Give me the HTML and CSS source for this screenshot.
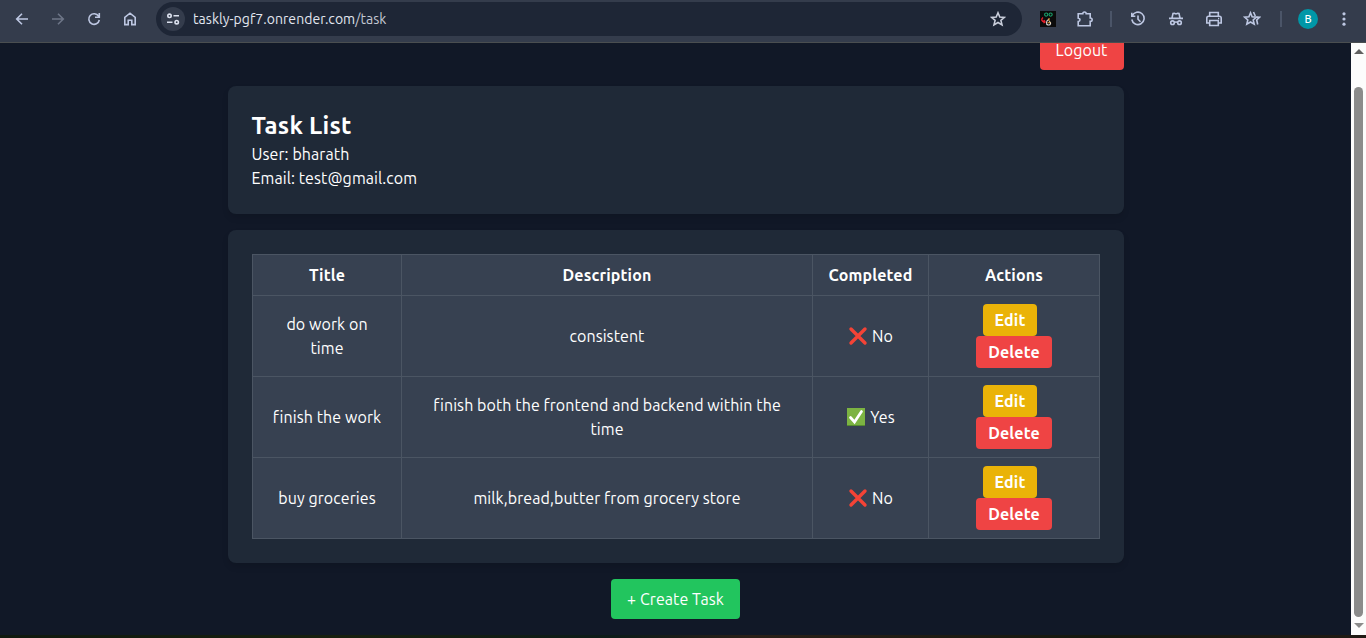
FILE: index.html
```html
<!DOCTYPE html>
<html lang="en">
<head>
<meta charset="utf-8">
<title>Taskly</title>
<link rel="stylesheet" href="styles.css">
</head>
<body>
<div class="browser">
  <header class="toolbar">
    <nav class="nav">
      <svg class="icon" viewBox="0 0 16 16"><path d="M14 8H3M8 2.700 2.700 8 8 13.300"/></svg>
      <svg class="icon dim" viewBox="0 0 16 16"><path d="M2 8h11M8 2.700 13.300 8 8 13.300"/></svg>
      <svg class="icon" viewBox="0 0 16 16"><path d="M12.600 5.200A5.300 5.300 0 1 0 13.300 9M13.300 2v4.300H9"/></svg>
      <svg class="icon" viewBox="0 0 16 16"><path d="M2.800 13.600V6.300L8 2.200l5.200 4.100v7.300H9.800V9.200H6.200v4.400z"/></svg>
    </nav>
    <div class="address">
      <span class="site"><svg class="icon" viewBox="0 0 16 16"><circle cx="4.500" cy="4.800" r="1.700"/><path d="M8.500 4.800H14M2 11.200h5.500"/><circle cx="11.700" cy="11.200" r="1.700"/></svg></span>
      <span class="url">taskly-pgf7.onrender.com<span class="path">/task</span></span>
      <svg class="icon bookmark" viewBox="0 0 16 16"><path d="m8 1.800 1.800 4.200 4.600.4-3.500 3 1.100 4.500L8 11.500l-4 2.400 1.100-4.500-3.500-3L6.200 6z"/></svg>
    </div>
    <div class="tools">
      <svg class="ext" viewBox="0 0 16 16"><path fill="#0b0b0b" d="M0 0h16v16H0z"/><g fill="none" stroke-width="1.100"><circle cx="6.200" cy="3.600" r="1.600" stroke="#18a06b"/><circle cx="10.600" cy="3.600" r="1.600" stroke="#18a06b"/><path stroke="#e5202c" stroke-width="1.400" d="M3 6.500C.8 8.500 1.500 10.500 4.800 11M4 9 5 11 3.500 12"/><path stroke="#ddd" d="M9 8.500C6 9 5.800 13.500 8 14c3 .5 3.500-3 1-3.500"/><path stroke="#e9a13a" d="M9 7v3M7.500 11.800h3"/></g></svg>
      <svg class="icon big puzzle" viewBox="0 0 18 18"><path d="M2.200 3.800h4.600c0-2.400 3.400-2.400 3.400 0h4v4.200c2.600 0 2.600 3.400 0 3.400v4.400h-12v-4.300c2.400-.2 2.400-3.200 0-3.400z"/></svg>
      <i class="divider"></i>
      <svg class="icon history" viewBox="0 0 16 16"><path d="M2.200 4.900A6.200 6.200 0 1 1 1.800 8.500M1.800 1.800v3.500h3.500M8 4.500V8.200l2.500 2.500"/></svg>
      <svg class="icon incog" viewBox="0 0 16 16"><path d="M1 7.400h14M4 7 5 2.400l1.400-.1L8 2.900l1.600-.6 1.400.1L12 7M6.500 11.300q1.500-.7 3 0"/><circle cx="4.500" cy="11.700" r="1.800"/><circle cx="11.500" cy="11.700" r="1.800"/></svg>
      <svg class="icon big print" viewBox="0 0 18 18"><path d="M4.700 6V2.500h8.600V6M4.500 13H1.800V8q0-1.800 1.800-1.800h10.800q1.800 0 1.800 1.800v5h-2.700M4.700 10.500h8.600v5H4.700z"/><path d="M13 8.500h1.200"/></svg>
      <svg class="icon big stars" viewBox="0 0 18 18"><path d="m7.500 2.800 1.600 4 4.300.4-3.200 2.800 1 4.200-3.700-2.200-3.700 2.200 1-4.200-3.200-2.800 4.300-.4zM10.500 2l1.800 4M13.500 7l3.200.2-3 2.800 1 4.500"/></svg>
      <i class="divider second"></i>
      <span class="avatar">B</span>
      <svg class="dots" viewBox="0 0 4 16"><circle cx="2" cy="2.800" r="1.600"/><circle cx="2" cy="8" r="1.600"/><circle cx="2" cy="13.200" r="1.600"/></svg>
    </div>
  </header>
  <div class="viewport">
    <main class="page">
      <button class="logout">Logout</button>
      <section class="card profile">
        <h1>Task List</h1>
        <p>User: bharath</p>
        <p>Email: test@gmail.com</p>
      </section>
      <section class="card">
        <table>
          <colgroup><col class="c1"><col class="c2"><col class="c3"><col class="c4"></colgroup>
          <thead><tr><th>Title</th><th>Description</th><th>Completed</th><th>Actions</th></tr></thead>
          <tbody>
            <tr><td>do work on<br>time</td><td>consistent</td><td><span class="status"><svg class="mark" viewBox="0 0 20 20"><path d="m3 3 14 14M17 3 3 17" stroke="#f44336" stroke-width="3.400" stroke-linecap="round"/></svg>No</span></td><td><div class="actions"><button class="edit">Edit</button><button class="delete">Delete</button></div></td></tr>
            <tr><td>finish the work</td><td>finish both the frontend and backend within the<br>time</td><td><span class="status"><svg class="mark" viewBox="0 0 20 20"><path d="M1 1h18v18H1z" fill="#7cb342"/><path d="M1 18.500h18" stroke="#558b2f"/><path d="m4.500 10.500 4 4.500 7-10.500" fill="none" stroke="#fff" stroke-width="2.700" stroke-linecap="round"/></svg>Yes</span></td><td><div class="actions"><button class="edit">Edit</button><button class="delete">Delete</button></div></td></tr>
            <tr><td>buy groceries</td><td>milk,bread,butter from grocery store</td><td><span class="status"><svg class="mark" viewBox="0 0 20 20"><path d="m3 3 14 14M17 3 3 17" stroke="#f44336" stroke-width="3.400" stroke-linecap="round"/></svg>No</span></td><td><div class="actions"><button class="edit">Edit</button><button class="delete">Delete</button></div></td></tr>
          </tbody>
        </table>
      </section>
      <button class="create">+ Create Task</button>
    </main>
    <aside class="scrollbar"><i class="up"></i><i class="thumb"></i><i class="down"></i></aside>
  </div>
  <footer class="desktop"></footer>
</div>
</body>
</html>
```
FILE: styles.css
```css
* { box-sizing: border-box; margin: 0; padding: 0; }
body { font: 16px/24px Ubuntu, "Noto Sans", sans-serif; letter-spacing: .08px; color: #fff; background: #111827; overflow: hidden; }
.browser { display: flex; flex-direction: column; height: 638px; }
.toolbar { display: flex; align-items: center; height: 43px; flex: none; padding-bottom: 5px; background: #343c4c; border-bottom: 1px solid #4a4e50; color: #bdc7e2; }
.nav { display: flex; gap: 20px; width: 156px; padding-left: 14px; }
.icon { width: 16px; height: 16px; fill: none; stroke: currentColor; stroke-width: 1.6; flex: none; display: block; }
.big { width: 18px; height: 18px; }
.dim { color: #6d7587; }
.address { display: flex; align-items: center; width: 866px; height: 34px; border-radius: 17px; background: #1e2636; padding: 0 16px 0 5px; }
.site { display: grid; place-items: center; width: 24px; height: 24px; border-radius: 50%; background: #343c4c; color: #dce1ee; }
.url { flex: 1; margin-left: 8px; font-size: 14px; letter-spacing: .05px; color: #e2e6f0; }
.path { color: #c3c7d3; }
.bookmark { color: #c9cedb; }
.tools { display: flex; align-items: center; padding-left: 18px; }
.ext { width: 16px; height: 16px; }
.puzzle { margin-left: 20px; }
.divider { width: 2px; height: 16px; background: #4b5568; margin: 0 18px 0 16px; }
.incog, .print, .stars { margin-left: 22px; }
.print { margin-left: 21px; }
.stars { margin-left: 20px; }
.divider.second { margin: 0 16px 0 19px; }
.avatar { width: 20px; height: 20px; border-radius: 50%; background: #0097a7; color: #fff; font-size: 11px; font-weight: 500; line-height: 20px; text-align: center; }
.dots { width: 4px; height: 16px; margin-left: 24px; fill: currentColor; }
.viewport { display: flex; height: 592px; overflow: hidden; }
.page { flex: 1; display: flex; flex-direction: column; align-items: center; gap: 16px; padding: 0 227px 0 228px; }
button { border: 0; border-radius: 4px; color: #fff; font: inherit; letter-spacing: inherit; text-align: center; flex: none; }
.logout { align-self: flex-end; width: 84px; height: 40px; margin-top: -13px; padding-right: 1px; background: #ef4444; }
.card { width: 896px; padding: 24px; border-radius: 8px; background: #1f2937; box-shadow: 0 4px 6px rgba(0,0,0,.1); flex: none; }
.profile { height: 128px; }
h1 { font-size: 24px; line-height: 32px; font-weight: 700; letter-spacing: .25px; }
.profile h1, .profile p { margin-left: -.5px; }
table { width: 848px; table-layout: fixed; border-collapse: collapse; background: #374151; text-align: center; }
.c1 { width: 149px; }
.c2 { width: 411px; }
.c3 { width: 116px; }
.c4 { width: 171px; }
th, td { border: 1px solid #4b5563; padding: 8px 0; vertical-align: middle; }
th { font-weight: 700; letter-spacing: .15px; }
td { height: 81px; }
.status { display: flex; align-items: center; justify-content: center; gap: 4px; }
.mark { width: 20px; height: 20px; }
.actions { display: flex; flex-direction: column; align-items: center; }
.actions button { height: 32px; font-weight: 700; letter-spacing: .15px; }
.edit { width: 54px; margin-right: 8px; background: #eab308; }
.delete { width: 76px; background: #ef4444; }
.create { width: 129px; height: 40px; margin-right: 1px; background: #22c55e; }
.scrollbar { display: flex; flex-direction: column; align-items: center; width: 15px; background: #fcfcfc; padding-top: 6px; }
.up, .down { border: 5px solid transparent; border-top: 0; border-bottom: 5px solid #606060; }
.thumb { width: 9px; height: 530px; margin: 33px 0 6px; border-radius: 5px; background: #8b8b8b; }
.down { border-bottom: 0; border-top: 5px solid #8b8b8b; }
.desktop { height: 3px; background: linear-gradient(90deg, #10190f, #18200f 25%, #0d1b19 45%, #2a2018 55%, #15180f 80%, #201a14); }
```
